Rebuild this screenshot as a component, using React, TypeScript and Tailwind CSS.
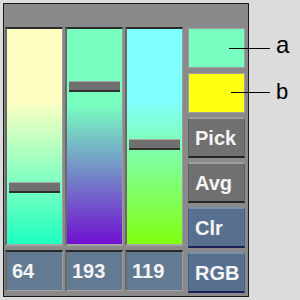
const SLIDERS = [
  { value: 64, knob: 153, bg: "bg-[linear-gradient(180deg,#ffffc2_0%,#ffffc2_33%,#1effc0_100%)]" },
  { value: 193, knob: 52, bg: "bg-[linear-gradient(180deg,#78ffc0_0%,#78ffc0_35%,#7010d0_100%)]" },
  { value: 119, knob: 110, bg: "bg-[linear-gradient(180deg,#80ffff_0%,#80ffff_33%,#80ff10_100%)]" },
];

const BUTTONS = [
  { label: "Pick", tone: "gray" },
  { label: "Avg", tone: "gray" },
  { label: "Clr", tone: "blue" },
  { label: "RGB", tone: "blue" },
];

function Slider({ value, knob, bg }: { value: number; knob: number; bg: string }) {
  return (
    <div className="w-[58px] flex flex-col">
      <div className="border-t-2 border-t-[#2a2a2a] border-l-2 border-l-[#6a6a6a] border-r border-r-[#9a9a9a] border-b-2 border-b-[#a4a4a4]">
        <div className={`relative h-[215px] ${bg}`}>
          <div
            className="absolute left-[2px] right-[2px] h-[11px] bg-[#707070] border-t border-t-[#a8a8a8] border-b-2 border-b-[#303030]"
            style={{ top: knob }}
          />
        </div>
      </div>
      <div className="mt-[4px] h-[41px] border-t-2 border-t-[#2a2a2a] border-l-2 border-l-[#6a6a6a] border-r border-r-[#9a9a9a] border-b border-b-[#a4a4a4] bg-[#627a92] flex items-center pl-[5px] text-[20px] font-bold text-[#f4f4f4] leading-none">
        {value}
      </div>
    </div>
  );
}

export default function App() {
  return (
    <div className="relative min-h-screen bg-[#dcdcdc] pt-[3px] pl-[3px] font-['Liberation_Sans',Arial,sans-serif]">
      <div className="w-[246px] h-[294px] border border-[#1a1a1a] bg-[#8a8a8a] flex">
        <div className="flex gap-[2px] pl-[1px] pt-[23px]">
          {SLIDERS.map((s) => (
            <Slider key={s.value} {...s} />
          ))}
        </div>
        <div className="ml-[5px] mt-[24px] w-[57px] flex flex-col">
          <div className="h-[40px] border border-[#a0a0a0] bg-[#78ffc0]" />
          <div className="mt-[5px] h-[40px] border border-[#a0a0a0] bg-[#ffff10]" />
          <div className="mt-[4px] flex flex-col gap-[4px]">
            {BUTTONS.map((b) => (
              <div
                key={b.label}
                className={
                  b.tone === "gray"
                    ? "h-[41px] bg-[#707070] border-t-2 border-t-[#9c9c9c] border-b-2 border-b-[#262626] border-x border-x-[#606060] flex items-center pl-[6px] text-[20px] font-bold text-[#f4f4f4] leading-none"
                    : "h-[41px] bg-[#587090] border-t-2 border-t-[#7a90aa] border-b-2 border-b-[#1e2058] border-x border-x-[#4a6080] flex items-center pl-[6px] text-[20px] font-bold text-[#f4f4f4] leading-none"
                }
              >
                {b.label}
              </div>
            ))}
          </div>
        </div>
      </div>
      <div className="absolute left-[229px] top-[48px] w-[41px] h-[1px] bg-black" />
      <div className="absolute left-[231px] top-[92px] w-[39px] h-[1px] bg-black" />
      <div className="absolute left-[276px] top-[33px] text-[24px] leading-none text-black">a</div>
      <div className="absolute left-[276px] top-[81px] text-[22px] leading-none text-black">b</div>
    </div>
  );
}
